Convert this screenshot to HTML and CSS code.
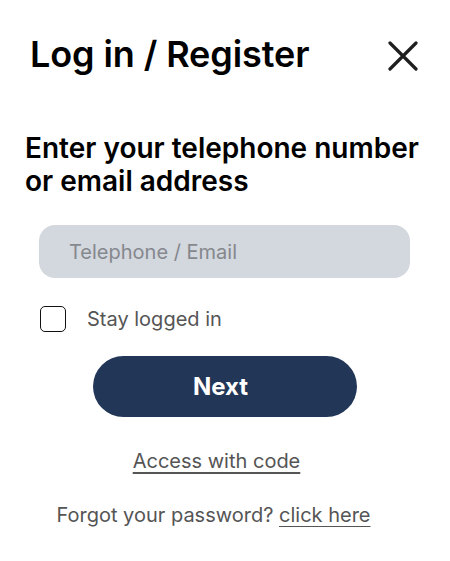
FILE: index.html
```html
<!DOCTYPE html>
<html lang="en">
<head>
<meta charset="utf-8">
<link rel="stylesheet" href="styles.css">
</head>
<body>
<div class="panel">
  <header class="top">
    <h1 class="title">Log in / Register</h1>
    <button class="close" aria-label="Close">
      <svg width="30" height="30" viewBox="0 0 30 30"><path d="M2 2 L28 28 M28 2 L2 28" stroke="#1f1f1f" stroke-width="3.2" stroke-linecap="round" fill="none"/></svg>
    </button>
  </header>
  <h2 class="prompt">Enter your telephone number or email address</h2>
  <div class="field"><input class="input" type="text" placeholder="Telephone / Email"></div>
  <label class="stay"><span class="box"></span><span class="stay-text">Stay logged in</span></label>
  <div class="actions">
    <button class="next">Next</button>
    <a class="link code" href="#">Access with code</a>
    <p class="forgot">Forgot your password? <a class="link" href="#">click here</a></p>
  </div>
</div>
</body>
</html>
```
FILE: styles.css
```css
* { box-sizing: border-box; }
html, body { margin: 0; background: #fff; }
body { font-family: Inter, "Noto Sans", sans-serif; color: #000; }
.panel { width: 450px; }
.top { display: flex; align-items: center; justify-content: space-between; padding: 30px 32px 0 30px; height: 78px; }
.title { margin: 0; font-size: 36px; font-weight: 600; letter-spacing: -0.1px; line-height: 44px; }
.close { border: 0; background: none; padding: 0; width: 30px; height: 30px; display: flex; margin-top: 4px; }
.prompt { margin: 54px 0 0 25px; font-size: 28px; font-weight: 600; line-height: 33px; width: 410px; }
.field { padding: 27px 40px 0 39px; }
.input { display: block; width: 371px; height: 53px; border: 0; border-radius: 16px; background: #d3d7de; padding: 0 30px; font-family: Inter, sans-serif; font-size: 20px; color: #333; outline: none; }
.input::placeholder { color: #85888d; }
.stay { display: flex; align-items: center; margin: 28px 0 0 40px; gap: 21px; }
.box { width: 26px; height: 26px; border: 1.5px solid #111; border-radius: 5px; }
.stay-text { font-size: 20px; color: #555; }
.actions { display: flex; flex-direction: column; align-items: center; }
.next { margin: 24px 0 0 0; width: 264px; height: 61px; border: 0; border-radius: 31px; background: #223657; color: #fff; font-family: Inter, sans-serif; font-size: 24px; font-weight: 700; padding: 0 9px 0 0; }
.link { color: #555; text-decoration: underline; text-underline-offset: 4px; text-decoration-thickness: 1.5px; }
.code { font-size: 20px; margin-top: 32px; line-height: 24px; margin-left: -17px; }
.forgot { margin: 30px 0 0 -23px; font-size: 20px; color: #555; line-height: 24px; }
```
